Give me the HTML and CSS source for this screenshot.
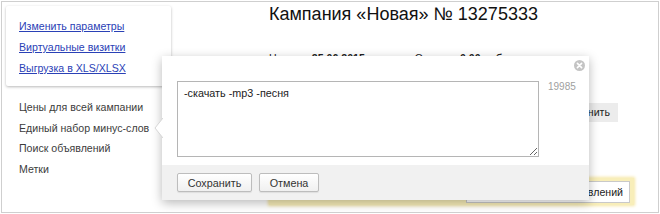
FILE: index.html
```html
<!DOCTYPE html>
<html lang="ru">
<head>
<meta charset="utf-8">
<link rel="stylesheet" href="styles.css">
</head>
<body>
<div class="frame">
  <aside class="sidebar">
    <div class="card">
      <a class="link" href="#">Изменить параметры</a>
      <a class="link" href="#">Виртуальные визитки</a>
      <a class="link" href="#">Выгрузка в XLS/XLSX</a>
    </div>
    <ul class="menu">
      <li>Цены для всей кампании</li>
      <li>Единый набор минус-слов</li>
      <li>Поиск объявлений</li>
      <li>Метки</li>
    </ul>
  </aside>
  <main class="content">
    <h1 class="title">Кампания «Новая» № 13275333</h1>
    <div class="meta">
      <span class="meta-item">Начало: <b>25.06.2015</b></span>
      <span class="meta-item">Остаток: <b>0.00 руб.</b></span>
    </div>
    <div class="row-right">
      <span class="flat-btn">Сохранить</span>
    </div>
    <div class="highlight">
      <span class="hl-btn">Остановить показ объявлений</span>
    </div>
  </main>

  <div class="popup">
    <svg class="popup-arrow" width="9" height="20" viewBox="0 0 9 20">
      <path d="M9 0 L1 10 L9 20 Z" fill="#fff"/>
      <path d="M9 0 L1 10 L9 20" fill="none" stroke="#d6d6d6" stroke-width="1"/>
    </svg>
    <div class="popup-body">
      <textarea class="words">-скачать -mp3 -песня</textarea>
      <span class="counter">19985</span>
      <span class="close">
        <svg width="11" height="11" viewBox="0 0 11 11">
          <circle cx="5.5" cy="5.5" r="5.5" fill="#c4c4c4"/>
          <path d="M3.4 3.4 L7.6 7.6 M7.6 3.4 L3.4 7.6" stroke="#fff" stroke-width="1.6" stroke-linecap="round"/>
        </svg>
      </span>
    </div>
    <div class="popup-footer">
      <button class="btn btn-save">Сохранить</button>
      <button class="btn btn-cancel">Отмена</button>
    </div>
  </div>
</div>
</body>
</html>
```

FILE: styles.css
```css
html, body {
  margin: 0;
  padding: 0;
  background: #fff;
}

body {
  font-family: "Liberation Sans", Arial, sans-serif;
  color: #000;
}

.frame {
  position: relative;
  box-sizing: border-box;
  margin: 1px 0 0 1px;
  width: 658px;
  height: 212px;
  border: 1px solid #cfcfcf;
  display: grid;
  grid-template-columns: 267px 1fr;
  overflow: hidden;
}

.sidebar {
  padding: 4px 0 0 4px;
}

.card {
  width: 165px;
  height: 80px;
  box-sizing: border-box;
  padding: 10px 0 0 13px;
  background: #fff;
  border-radius: 2px;
  box-shadow: 0 1px 3px rgba(0, 0, 0, 0.28);
  display: flex;
  flex-direction: column;
  align-items: flex-start;
}

.link {
  font-size: 10.6px;
  line-height: 21px;
  color: #2a41b6;
  text-decoration: underline;
}

.menu {
  list-style: none;
  margin: 11px 0 0 0;
  padding: 0 0 0 13px;
}

.menu li {
  font-size: 10.6px;
  line-height: 20.5px;
  color: #3c3c3c;
}

.content {
  padding-right: 24px;
}

.title {
  margin: 2px 0 0 0;
  font-size: 18px;
  font-weight: normal;
  line-height: 20px;
  color: #111;
}

.meta {
  margin-top: 27px;
  display: flex;
  gap: 50px;
  font-size: 10.6px;
  line-height: 14px;
  color: #222;
}

.row-right {
  display: flex;
  justify-content: flex-end;
  margin-top: 38px;
  padding-right: 16px;
}

.flat-btn {
  display: inline-block;
  height: 19px;
  line-height: 19px;
  padding: 0 8px;
  background: #ececec;
  font-size: 10.6px;
  color: #222;
}

.highlight {
  margin-top: 56px;
  height: 27px;
  box-sizing: border-box;
  background: #f8eeb9;
  box-shadow: 0 0 3px 1px #f6e7a6;
  display: flex;
  justify-content: flex-end;
  align-items: center;
  padding-right: 4px;
}

.hl-btn {
  height: 22px;
  line-height: 20px;
  box-sizing: border-box;
  padding: 0 6px;
  background: #fff;
  border: 1px solid #c9c9c9;
  font-size: 10.6px;
  color: #222;
}

/* popup */
.popup {
  position: absolute;
  left: 160px;
  top: 54px;
  width: 427px;
  height: 144px;
  background: #fff;
  box-shadow: 0 3px 10px rgba(0, 0, 0, 0.28);
  display: flex;
  flex-direction: column;
  z-index: 2;
}

.popup-arrow {
  position: absolute;
  left: -8px;
  top: 62px;
}

.popup-body {
  position: relative;
  flex: 1;
  display: flex;
  align-items: flex-start;
  padding: 25px 0 0 15px;
}

.words {
  box-sizing: border-box;
  width: 362px;
  height: 76px;
  margin: 0;
  padding: 4px 6px;
  border: 1px solid #b5b5b5;
  font-family: "Liberation Sans", Arial, sans-serif;
  font-size: 10.8px;
  line-height: 14px;
  color: #222;
  resize: both;
  outline: none;
}

.counter {
  margin: 0 0 0 9px;
  font-size: 10px;
  line-height: 12px;
  color: #a0a0a0;
}

.close {
  position: absolute;
  right: 4px;
  top: 4px;
  width: 11px;
  height: 11px;
  display: block;
}

.close svg {
  display: block;
}

.popup-footer {
  height: 35px;
  box-sizing: border-box;
  background: #f1f1f1;
  padding: 8px 0 0 15px;
  display: flex;
  gap: 7px;
  align-items: flex-start;
}

.btn {
  height: 19px;
  box-sizing: border-box;
  padding: 0;
  border: 1px solid #bdbdbd;
  border-radius: 2px;
  background: linear-gradient(#fff, #f0f0f0);
  box-shadow: 0 1px 1px rgba(0, 0, 0, 0.08);
  font-family: "Liberation Sans", Arial, sans-serif;
  font-size: 10.8px;
  color: #333;
}

.btn-save {
  width: 75px;
}

.btn-cancel {
  width: 60px;
}
```
